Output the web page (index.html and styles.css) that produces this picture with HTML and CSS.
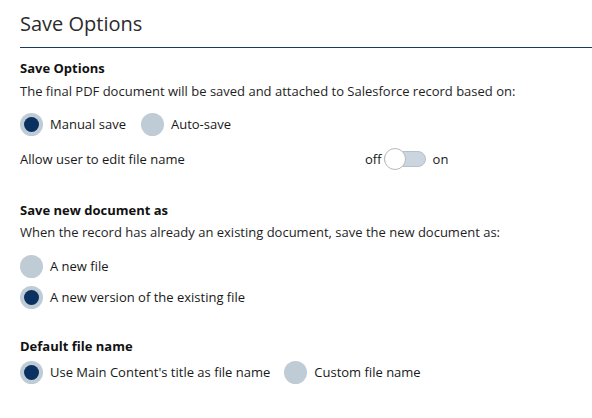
FILE: index.html
```html
<!DOCTYPE html>
<html>
<head>
<meta charset="utf-8">
<link rel="stylesheet" href="styles.css">
</head>
<body>
<div class="page">
  <h1 class="title">Save Options</h1>
  <section class="section first">
    <h2 class="heading">Save Options</h2>
    <p class="desc">The final PDF document will be saved and attached to Salesforce record based on:</p>
    <div class="row radios">
      <label class="radio"><span class="dot on"></span>Manual save</label>
      <label class="radio"><span class="dot"></span>Auto-save</label>
    </div>
    <div class="row toggle-row">
      <span class="toggle-label">Allow user to edit file name</span>
      <span class="toggle">
        <span class="tl">off</span>
        <span class="track"><span class="knob"></span></span>
        <span class="tr">on</span>
      </span>
    </div>
  </section>
  <section class="section second">
    <h2 class="heading">Save new document as</h2>
    <p class="desc">When the record has already an existing document, save the new document as:</p>
    <div class="stack">
      <label class="radio"><span class="dot"></span>A new file</label>
      <label class="radio"><span class="dot on"></span>A new version of the existing file</label>
    </div>
  </section>
  <section class="section third">
    <h2 class="heading">Default file name</h2>
    <div class="row radios tight">
      <label class="radio"><span class="dot on"></span>Use Main Content's title as file name</label>
      <label class="radio"><span class="dot"></span>Custom file name</label>
    </div>
  </section>
</div>
</body>
</html>
```
FILE: styles.css
```css
html, body {
  margin: 0;
  padding: 0;
  background: #ffffff;
}
body {
  font-family: "Open Sans", "Noto Sans", sans-serif;
  color: #181818;
  font-size: 13px;
}
.page {
  padding-left: 20px;
}
.title {
  margin: 0;
  padding-top: 9px;
  font-size: 20px;
  font-weight: 400;
  line-height: 30px;
  height: 30px;
  color: #2b2b2b;
  border-bottom: 1.3px solid #1b3a5e;
  padding-bottom: 8px;
}
.section {
  display: flex;
  flex-direction: column;
}
.heading {
  margin: 0;
  font-size: 13px;
  font-weight: 700;
  line-height: 18px;
  color: #111;
}
.desc {
  margin: 0;
  line-height: 18px;
  color: #1e1e1e;
}
.first { padding-top: 11px; }
.first .desc { margin-top: 5px; }
.row {
  display: flex;
  align-items: center;
}
.radios {
  gap: 15px;
  margin-top: 12px;
}
.radio {
  display: flex;
  align-items: center;
  gap: 7px;
  height: 24px;
  line-height: 18px;
}
.dot {
  width: 23px;
  height: 23px;
  box-sizing: border-box;
  border-radius: 50%;
  background: #bfcbd5;
  display: flex;
  align-items: center;
  justify-content: center;
}
.dot.on::after {
  content: "";
  width: 15px;
  height: 15px;
  border-radius: 50%;
  background: #0a3160;
}
.toggle-row {
  margin-top: 11px;
  height: 24px;
}
.toggle-label {
  width: 345px;
  line-height: 18px;
}
.toggle {
  display: flex;
  align-items: center;
}
.tl { margin-right: 2px; }
.tr { margin-left: 7px; }
.track {
  position: relative;
  width: 42px;
  height: 16px;
  border-radius: 8px;
  background: #cbd5df;
  border: 1px solid #b7c0c9;
  box-sizing: border-box;
}
.knob {
  position: absolute;
  left: -1px;
  top: -4px;
  width: 22px;
  height: 22px;
  box-sizing: border-box;
  border-radius: 50%;
  background: #ffffff;
  border: 1px solid #b9b9b9;
}
.second { padding-top: 30px; }
.second .desc { margin-top: 4px; }
.stack {
  display: flex;
  flex-direction: column;
  gap: 7px;
  margin-top: 13px;
}
.third { padding-top: 28px; }
.tight { margin-top: 5px; gap: 14px; }
```
